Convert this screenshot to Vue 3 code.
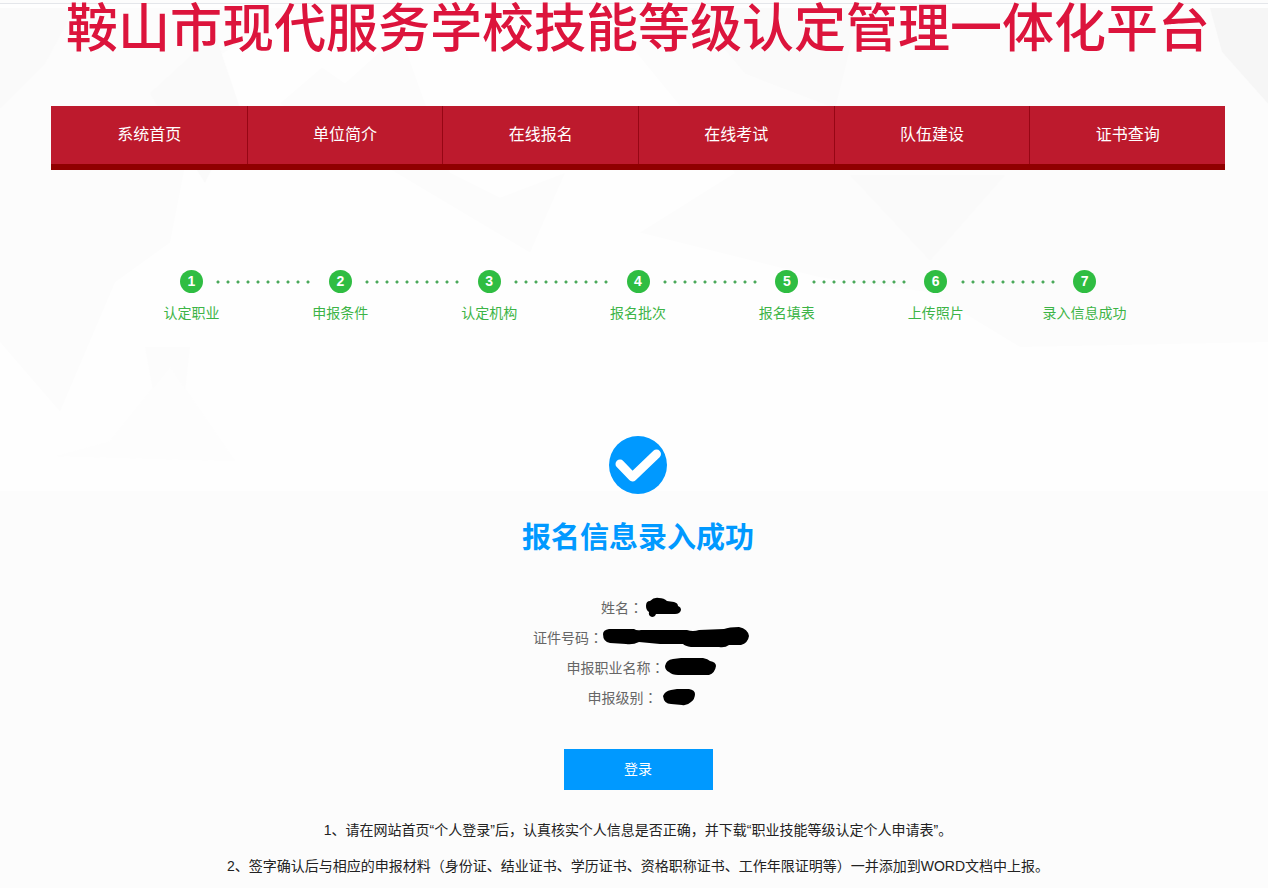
<template>
    <div class="page">
        <svg class="backdrop" viewBox="0 0 1268 490" preserveAspectRatio="none" aria-hidden="true">
            <rect width="1268" height="490" fill="#fefefe" />
            <polygon points="0,4 300,4 205,60 170,240 115,280 60,410 0,340" fill="#fcfcfc" />
            <polygon points="0,4 75,4 45,60 0,105" fill="#fafafa" />
            <polygon points="150,90 215,30 240,105 205,180" fill="#fafafa" />
            <polygon points="280,100 322,64 345,80 400,30 450,170 500,195 565,170 530,250" fill="#fcfcfc" />
            <polygon points="600,4 1268,4 1268,340 1020,345 930,290 820,275 640,230 735,170" fill="#fcfcfc" />
            <polygon points="690,4 860,4 835,105 745,70" fill="#fafafa" />
            <polygon points="850,172 1005,172 930,258" fill="#fafafa" />
            <polygon points="1210,4 1268,4 1268,100 1222,48" fill="#f6f6f6" />
            <polygon points="145,345 190,345 185,390 155,400" fill="#fcfcfc" />
            <polygon points="55,455 110,440 170,365 235,460" fill="#fdfdfd" />
        </svg>

        <header class="header">
            <h1 class="site-title">鞍山市现代服务学校技能等级认定管理一体化平台</h1>
            <nav class="nav">
                <a v-for="name in menus" :key="name" href="#">{{ name }}</a>
            </nav>
        </header>

        <ol class="steps">
            <li v-for="(name, i) in steps" :key="name" class="step">
                <span class="number">{{ i + 1 }}</span>
                <span>{{ name }}</span>
            </li>
        </ol>

        <main class="result">
            <svg class="check" viewBox="0 0 58 58" aria-hidden="true">
                <circle cx="29" cy="29" r="29" fill="#09f" />
                <path d="M11 28 23.5 41 47.5 18" fill="none" stroke="#fff" stroke-width="9" stroke-linecap="round" stroke-linejoin="round" />
            </svg>
            <h2>报名信息录入成功</h2>

            <ul class="info">
                <li v-for="v in info" :key="v.label">
                    <span>{{ v.label }}<span class="colon">：</span></span>
                    <svg :width="v.width" height="22" :viewBox="'0 0 ' + v.width + ' 22'" aria-hidden="true">
                        <path :d="v.mask" />
                    </svg>
                </li>
            </ul>

            <button type="button" class="login">登录</button>

            <div class="notes">
                <p>1、请在网站首页“个人登录”后，认真核实个人信息是否正确，并下载“职业技能等级认定个人申请表”。</p>
                <p>2、签字确认后与相应的申报材料（身份证、结业证书、学历证书、资格职称证书、工作年限证明等）一并添加到WORD文档中上报。</p>
            </div>
        </main>
    </div>
</template>

<script setup>
const menus = ['系统首页', '单位简介', '在线报名', '在线考试', '队伍建设', '证书查询']

const steps = ['认定职业', '申报条件', '认定机构', '报名批次', '报名填表', '上传照片', '录入信息成功']

// mask: 개인정보를 가리는 검은 영역
const info = [
    {
        label: '姓名',
        width: 38,
        mask: 'M3 9 Q3 4 7 4 Q11 0 16 1 Q21 1 24 4 L31 5 Q35 6 35 9 Q38 10 38 13 Q37 17 32 17 L13 17 Q12 20 9 20 Q5 19 6 15 Q3 13 3 9Z'
    },
    {
        label: '证件号码',
        width: 146,
        mask: 'M0 7 Q0 3 6 2 L31 2 Q34 4 38 3 L84 3 Q90 5 96 3 L121 2 Q126 0 136 0 Q145 2 146 9 Q145 16 138 18 L126 18 Q122 21 116 20 L88 20 Q82 19 80 17 L57 17 L36 15 Q30 18 23 17 L7 16 Q0 15 0 7Z'
    },
    {
        label: '申报职业名称',
        width: 51,
        mask: 'M0 9 Q1 3 8 2 L16 1 L38 1 Q43 2 45 4 Q51 5 51 9 Q50 16 44 18 L13 18 Q7 18 4 15 Q0 13 0 9Z'
    },
    {
        label: '申报级别',
        width: 37,
        mask: 'M5 9 Q7 4 13 3 L19 2 L31 2 Q37 3 37 7 Q37 12 33 15 Q29 19 24 18 L13 17 Q6 17 5 9Z'
    },
]
</script>

<style>
body {margin: 0; background-color: #fcfcfc;}
</style>

<style scoped>
.page {
    position: relative; isolation: isolate; box-sizing: border-box; min-height: 100vh; padding: 0 43px 0 51px;
    font-family: "Liberation Sans", "Noto Sans CJK SC", sans-serif; font-size: 14px; color: #222;
}
.backdrop {position: absolute; top: 3px; left: 0; z-index: -1; width: 100%; height: 487px; border-top: 1px solid #e4e6ea;}

.site-title {
    margin: 0; text-align: center; white-space: nowrap;
    font-size: 52px; font-weight: 500; line-height: 58px; color: #dc143c;
}
.nav {display: flex; margin-top: 48px; background-color: #bd1a2d; border-bottom: 6px solid #900000;}
.nav a {
    flex: 1; border-left: 1px solid #960614; line-height: 58px; text-align: center;
    font-size: 16px; color: #fff; text-decoration: none;
}
.nav a:first-child {border-left-color: transparent;}

.steps {display: flex; margin: 100px 66px 0; padding: 0; list-style: none; color: #3cb446;}
.step {
    position: relative; flex: 1;
    display: flex; flex-direction: column; align-items: center; gap: 10px; line-height: 20px; white-space: nowrap;
}
.step .number {
    width: 23px; border-radius: 50%; background-color: #2fbd42;
    line-height: 23px; text-align: center; font-weight: bold; color: #fff;
}
/* 단계 사이의 점선 */
.step:not(:last-child)::after {
    content: ''; position: absolute; top: 10px; left: calc(50% + 22px); width: 100px; height: 4px;
    background: radial-gradient(circle, #4aa95a 1px, transparent 2px) 0 0 / 10px 4px;
}

.result {display: flex; flex-direction: column; align-items: center; margin-top: 113px;}
.check {width: 58px; height: 58px;}
.result h2 {margin: 24px 0 0; font-size: 29px; line-height: 40px; color: #09f;}

.info {margin: 34px 0 0; padding: 0 0 0 6px; list-style: none; color: #666;}
.info li {display: flex; align-items: center; justify-content: center; height: 30px; white-space: nowrap;}
.info svg {margin-top: 2px;}
.colon {font-family: "Noto Sans CJK TC", sans-serif;}

.login {
    width: 149px; height: 41px; margin-top: 37px; padding: 0 0 3px; border: 0;
    background-color: #09f; font: inherit; color: #fff; cursor: pointer;
}

.notes {margin-top: 22px; text-align: center; line-height: 36px;}
.notes p {margin: 0;}
</style>
